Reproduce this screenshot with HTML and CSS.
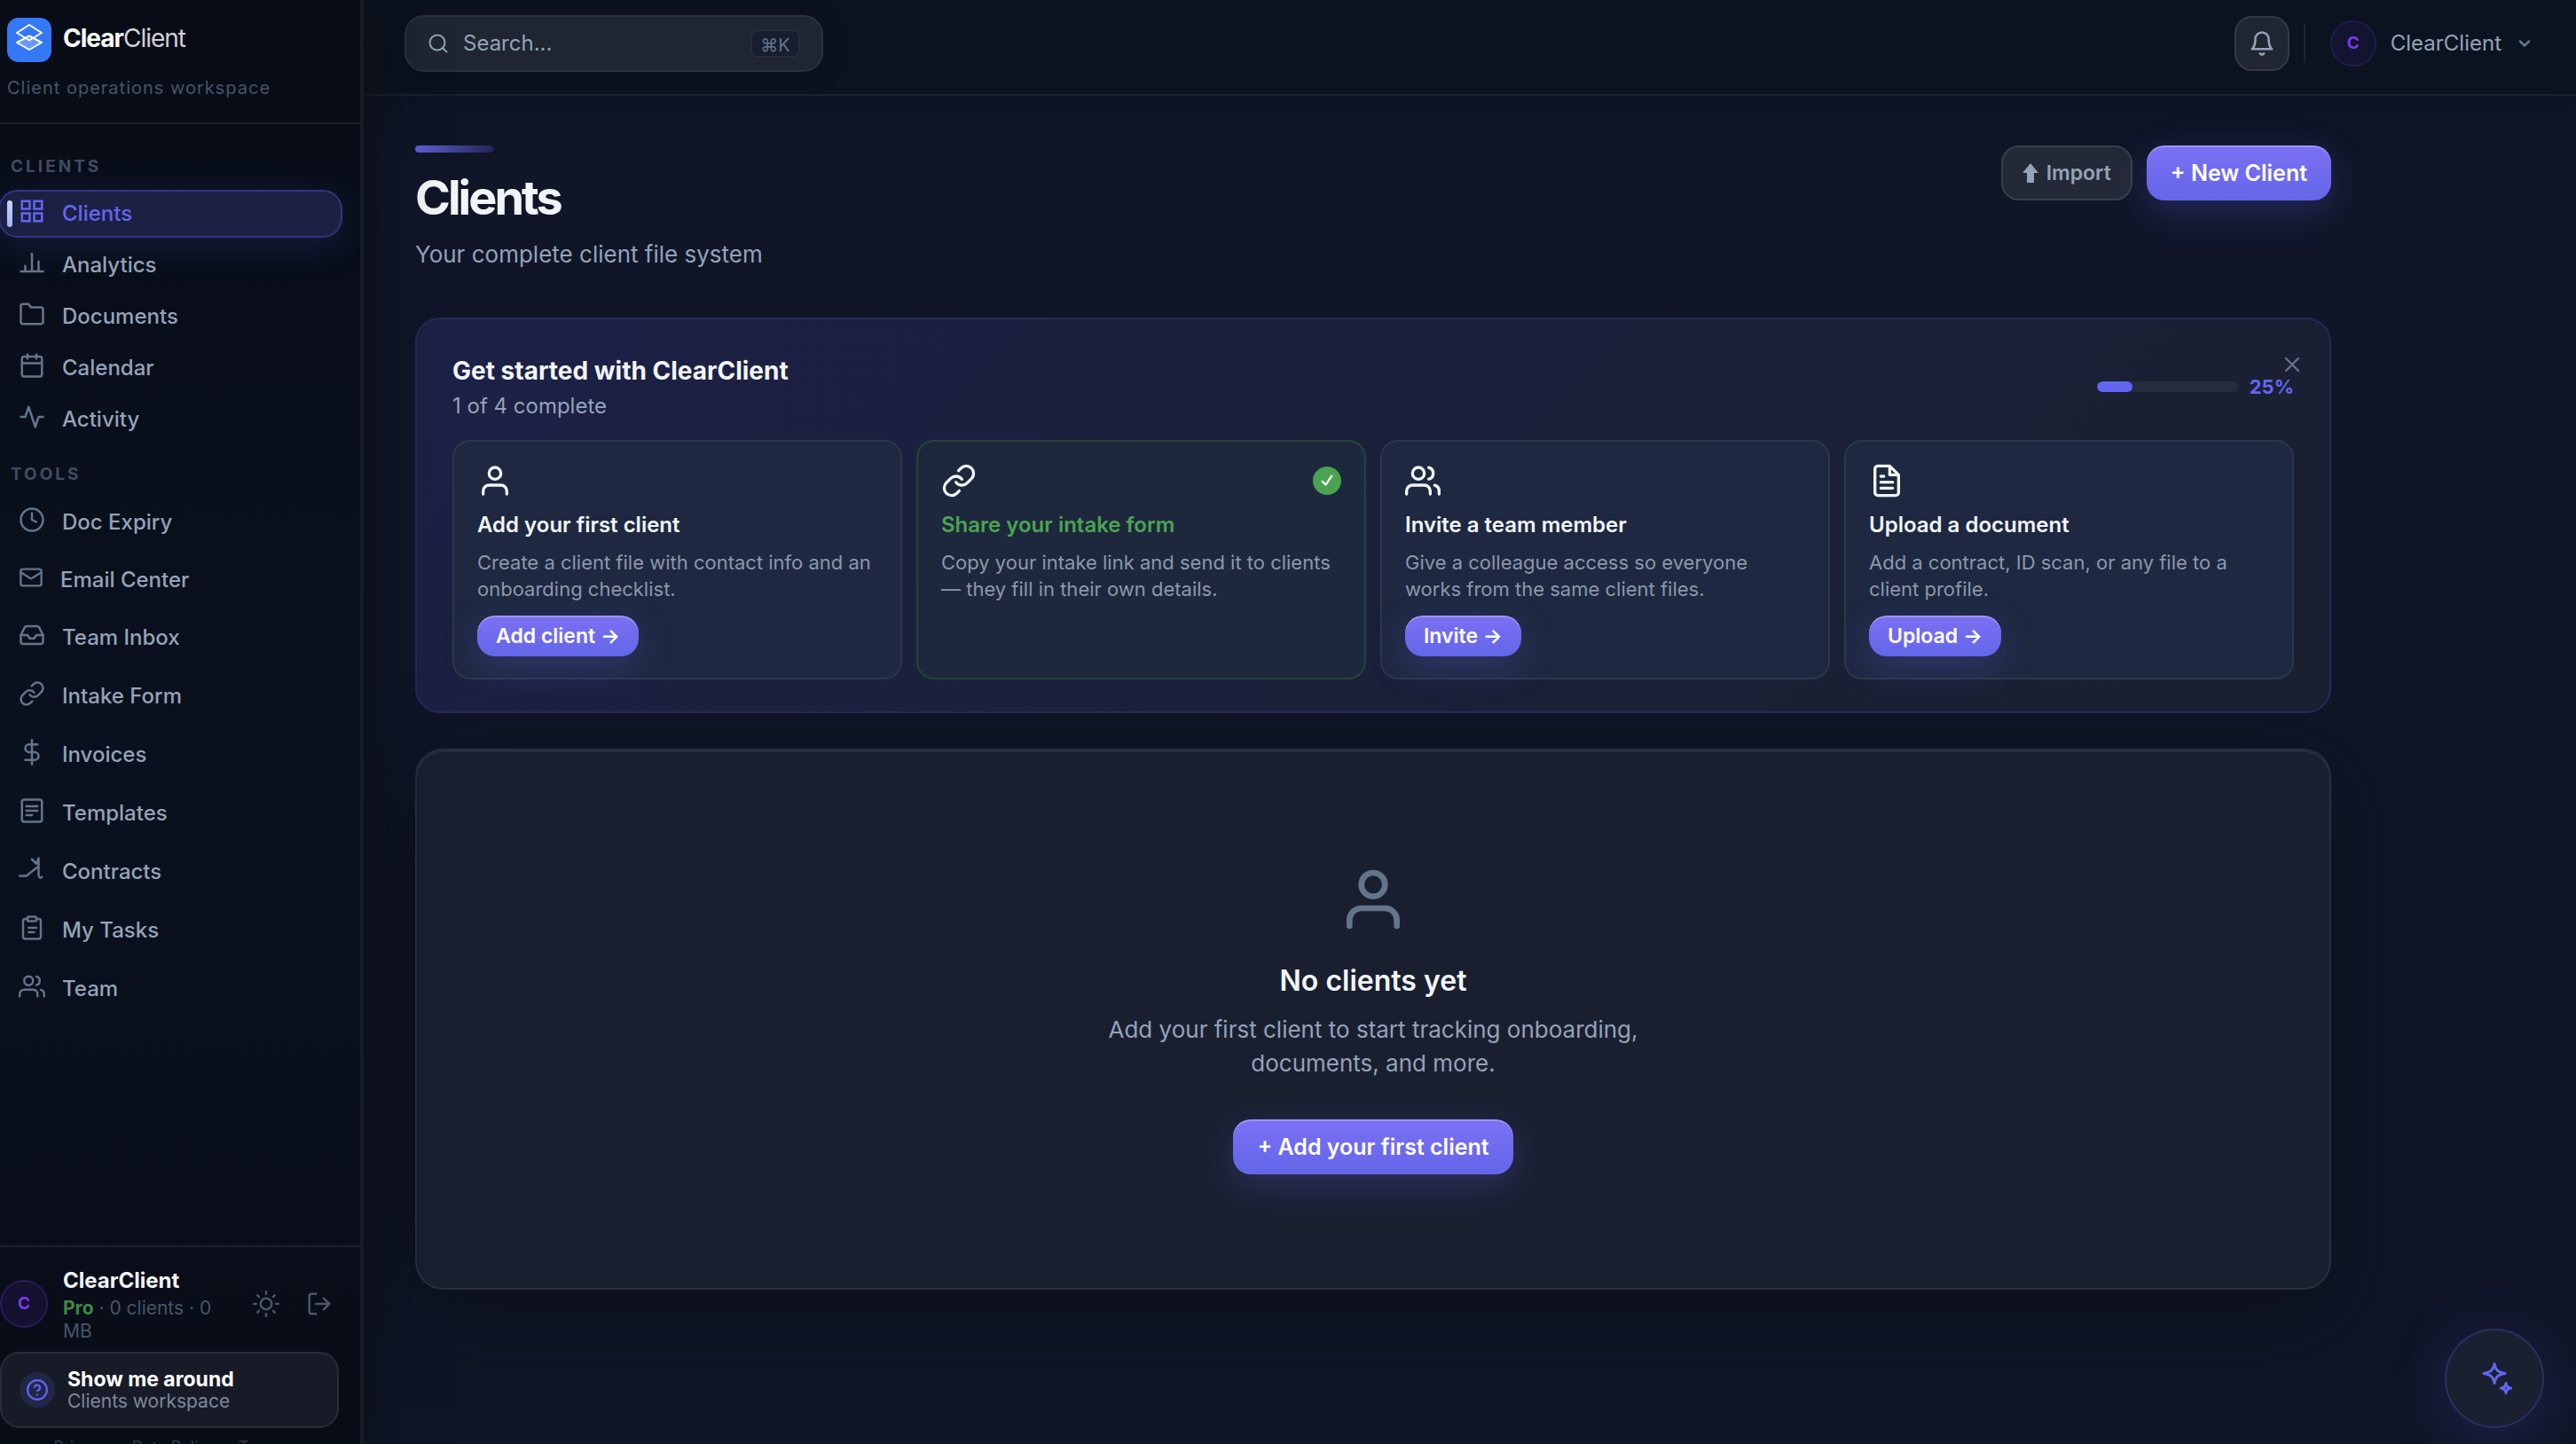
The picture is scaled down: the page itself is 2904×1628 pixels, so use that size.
FILE: index.html
```html
<!DOCTYPE html>
<html lang="en">
<head>
<meta charset="utf-8">
<title>Clients · ClearClient</title>
<meta name="viewport" content="width=device-width, initial-scale=1">
<link rel="stylesheet" href="styles.css">
</head>
<body>
<div class="shell">
  <aside class="sidebar">
    <div class="brand">
      <div class="brand-row">
        <svg class="brand-logo" viewBox="0 0 50 50" aria-hidden="true">
          <rect width="50" height="50" rx="13" fill="#3478f6"/>
          <path d="M25 20.500 39 28 25 36 11 28Z" fill="#fff" fill-opacity=".25"/>
          <path d="M25 8 39 17 25 25.500 11 17Z" fill="none" stroke="#fff" stroke-width="2" stroke-linejoin="round"/>
          <path d="M25 20.500 39 28 25 36 11 28Z" fill="none" stroke="#fff" stroke-width="2" stroke-linejoin="round"/>
        </svg>
        <span class="brand-name"><strong>Clear</strong>Client</span>
      </div>
      <p class="brand-tag">Client operations workspace</p>
    </div>

    <nav class="nav" aria-label="Main">
      <h2 class="nav-label">CLIENTS</h2>
      <a class="nav-item active" href="#clients"><svg class="icon" viewBox="0 0 24 24"><path d="M3 3h7v7H3zM14 3h7v7h-7zM3 14h7v7H3zM14 14h7v7h-7z"/></svg>Clients</a>
      <a class="nav-item" href="#analytics"><svg class="icon" viewBox="0 0 24 24"><path d="M18 20v-9M12 20V4M6 20v-5M2 20h20"/></svg>Analytics</a>
      <a class="nav-item" href="#documents"><svg class="icon" viewBox="0 0 24 24"><path d="M22 19a2 2 0 0 1-2 2H4a2 2 0 0 1-2-2V5a2 2 0 0 1 2-2h5l2 3h9a2 2 0 0 1 2 2z"/></svg>Documents</a>
      <a class="nav-item" href="#calendar"><svg class="icon" viewBox="0 0 24 24"><rect x="3" y="4" width="18" height="18" rx="2"/><path d="M16 2v4M8 2v4M3 10h18"/></svg>Calendar</a>
      <a class="nav-item" href="#activity"><svg class="icon" viewBox="0 0 24 24"><path d="M22 12h-4l-3 9L9 3l-3 9H2"/></svg>Activity</a>

      <h2 class="nav-label spaced">TOOLS</h2>
      <a class="nav-item tall" href="#expiry"><svg class="icon" viewBox="0 0 24 24"><circle cx="12" cy="12" r="10"/><path d="M12 6v6l4 2"/></svg>Doc Expiry</a>
      <a class="nav-item mail" href="#email"><svg class="icon small" viewBox="0 0 24 24"><rect x="2" y="4" width="20" height="16" rx="2"/><path d="m22 7-8.970 5.700a1.940 1.940 0 0 1-2.060 0L2 7"/></svg>Email Center</a>
      <a class="nav-item tall" href="#inbox"><svg class="icon" viewBox="0 0 24 24"><path d="M22 12h-6l-2 3h-4l-2-3H2"/><path d="M5.450 5.110 2 12v6a2 2 0 0 0 2 2h16a2 2 0 0 0 2-2v-6l-3.450-6.890A2 2 0 0 0 16.760 4H7.240a2 2 0 0 0-1.790 1.110z"/></svg>Team Inbox</a>
      <a class="nav-item tall" href="#intake"><svg class="icon" viewBox="0 0 24 24"><path d="M10 13a5 5 0 0 0 7.540.54l3-3a5 5 0 0 0-7.070-7.070l-1.720 1.710"/><path d="M14 11a5 5 0 0 0-7.540-.54l-3 3a5 5 0 0 0 7.070 7.070l1.710-1.710"/></svg>Intake Form</a>
      <a class="nav-item tall" href="#invoices"><svg class="icon" viewBox="0 0 24 24"><path d="M12 1v22M17 5H9.500a3.500 3.500 0 0 0 0 7h5a3.500 3.500 0 0 1 0 7H6"/></svg>Invoices</a>
      <a class="nav-item tall" href="#templates"><svg class="icon" viewBox="0 0 24 24"><rect x="3" y="2" width="18" height="20" rx="2"/><path d="M7 8h10M7 12h10M7 16h5"/></svg>Templates</a>
      <a class="nav-item tall" href="#contracts"><svg class="icon" viewBox="0 0 24 24"><path d="M1 18h6l10-8M12 3l4 4 2-5v15c0 3 2 3 3 2"/></svg>Contracts</a>
      <a class="nav-item tall" href="#tasks"><svg class="icon" viewBox="0 0 24 24"><path d="M16 4h2a2 2 0 0 1 2 2v14a2 2 0 0 1-2 2H6a2 2 0 0 1-2-2V6a2 2 0 0 1 2-2h2"/><rect x="8" y="2" width="8" height="4" rx="1"/><path d="M9 12h7M9 16h5"/></svg>My Tasks</a>
      <a class="nav-item tall" href="#team"><svg class="icon" viewBox="0 0 24 24"><path d="M17 21v-2a4 4 0 0 0-4-4H5a4 4 0 0 0-4 4v2"/><circle cx="9" cy="7" r="4"/><path d="M23 21v-2a4 4 0 0 0-3-3.870M16 3.130a4 4 0 0 1 0 7.750"/></svg>Team</a>
    </nav>

    <div class="side-foot">
      <div class="account">
        <span class="avatar">C</span>
        <div class="account-text">
          <strong class="account-name">ClearClient</strong>
          <p class="account-plan"><b>Pro</b> · 0 clients · 0 MB</p>
        </div>
        <div class="account-actions">
          <button class="ghost" type="button" aria-label="Toggle theme"><svg class="icon" viewBox="0 0 24 24"><circle cx="12" cy="12" r="5"/><path d="M12 1v2M12 21v2M4.220 4.220l1.420 1.420M18.360 18.360l1.420 1.420M1 12h2M21 12h2M4.220 19.780l1.420-1.420M18.360 5.640l1.420-1.420"/></svg></button>
          <button class="ghost" type="button" aria-label="Sign out"><svg class="icon" viewBox="0 0 24 24"><path d="M9 21H5a2 2 0 0 1-2-2V5a2 2 0 0 1 2-2h4M16 17l5-5-5-5M21 12H9"/></svg></button>
        </div>
      </div>
      <button class="tour" type="button">
        <span class="tour-icon"><svg class="icon" viewBox="0 0 24 24"><circle cx="12" cy="12" r="10"/><path d="M9.090 9a3 3 0 0 1 5.830 1c0 2-3 3-3 3M12 17h.01"/></svg></span>
        <span class="tour-text"><strong>Show me around</strong><span>Clients workspace</span></span>
      </button>
      <div class="legal"><a href="#privacy">Privacy</a><span>·</span><a href="#data">Data Policy</a><span>·</span><a href="#terms">Terms</a></div>
    </div>
  </aside>

  <div class="main">
    <header class="topbar">
      <label class="search">
        <svg class="icon" viewBox="0 0 24 24"><circle cx="11" cy="11" r="8.500"/><path d="m21.500 21.500-4-4"/></svg>
        <input type="text" placeholder="Search..." aria-label="Search">
        <kbd>⌘K</kbd>
      </label>
      <div class="top-right">
        <button class="bell" type="button" aria-label="Notifications"><svg class="icon" viewBox="0 0 24 24"><path d="M18 8A6 6 0 0 0 6 8c0 7-3 9-3 9h18s-3-2-3-9M13.730 21a2 2 0 0 1-3.460 0"/></svg></button>
        <span class="divider"></span>
        <button class="profile" type="button"><span class="avatar">C</span>ClearClient<svg class="icon chevron" viewBox="0 0 24 24"><path d="m6 9 6 6 6-6"/></svg></button>
      </div>
    </header>

    <main class="content">
      <div class="page-head">
        <div>
          <div class="accent"></div>
          <h1>Clients</h1>
          <p class="subtitle">Your complete client file system</p>
        </div>
        <div class="page-actions">
          <button class="btn secondary" type="button"><svg class="up" viewBox="0 0 18 22"><path d="M9 0 18 11h-5v11H5V11H0z"/></svg>Import</button>
          <button class="btn primary" type="button">+ New Client</button>
        </div>
      </div>

      <section class="onboard">
        <button class="close" type="button" aria-label="Dismiss"><svg class="icon" viewBox="0 0 24 24"><path d="M18 6 6 18M6 6l12 12"/></svg></button>
        <div class="onboard-head">
          <div>
            <h2>Get started with ClearClient</h2>
            <p>1 of 4 complete</p>
          </div>
          <div class="progress"><div class="track"><div class="fill" style="width:25%"></div></div><span>25%</span></div>
        </div>
        <div class="steps">
          <article class="step">
            <svg class="icon" viewBox="0 0 24 24"><path d="M20 21v-2a4 4 0 0 0-4-4H8a4 4 0 0 0-4 4v2"/><circle cx="12" cy="7" r="4"/></svg>
            <h3>Add your first client</h3>
            <p>Create a client file with contact info and an onboarding checklist.</p>
            <button class="btn primary mini" type="button">Add client →</button>
          </article>
          <article class="step done">
            <svg class="icon" viewBox="0 0 24 24"><path d="M10 13a5 5 0 0 0 7.540.54l3-3a5 5 0 0 0-7.070-7.070l-1.720 1.710"/><path d="M14 11a5 5 0 0 0-7.540-.54l-3 3a5 5 0 0 0 7.070 7.070l1.710-1.710"/></svg>
            <span class="tick"><svg class="icon" viewBox="0 0 24 24"><path d="m5 13 5 5 9-13"/></svg></span>
            <h3>Share your intake form</h3>
            <p>Copy your intake link and send it to clients — they fill in their own details.</p>
          </article>
          <article class="step">
            <svg class="icon" viewBox="0 0 24 24"><path d="M17 21v-2a4 4 0 0 0-4-4H5a4 4 0 0 0-4 4v2"/><circle cx="9" cy="7" r="4"/><path d="M23 21v-2a4 4 0 0 0-3-3.870M16 3.130a4 4 0 0 1 0 7.750"/></svg>
            <h3>Invite a team member</h3>
            <p>Give a colleague access so everyone works from the same client files.</p>
            <button class="btn primary mini" type="button">Invite →</button>
          </article>
          <article class="step">
            <svg class="icon" viewBox="0 0 24 24"><path d="M14 2H6a2 2 0 0 0-2 2v16a2 2 0 0 0 2 2h12a2 2 0 0 0 2-2V8zM14 2v6h6M16 13H8M16 17H8M10 9H8"/></svg>
            <h3>Upload a document</h3>
            <p>Add a contract, ID scan, or any file to a client profile.</p>
            <button class="btn primary mini" type="button">Upload →</button>
          </article>
        </div>
      </section>

      <section class="empty">
        <svg class="icon" viewBox="0 0 24 24"><path d="M20 21v-2a4 4 0 0 0-4-4H8a4 4 0 0 0-4 4v2"/><circle cx="12" cy="7" r="4"/></svg>
        <h2>No clients yet</h2>
        <p>Add your first client to start tracking onboarding, documents, and more.</p>
        <button class="btn primary" type="button">+ Add your first client</button>
      </section>
    </main>
  </div>
</div>
<button class="fab" type="button" aria-label="Assistant"><svg class="icon" viewBox="0 0 40 40"><path d="M20 3.500c1.600 7.500 3.500 9.400 12 11-8.500 1.600-10.400 3.500-12 11-1.600-7.500-3.500-9.400-12-11 8.500-1.600 10.400-3.500 12-11Z"/><path d="M33 25.500c.9 3.900 1.600 4.600 5.500 5.500-3.900.9-4.600 1.600-5.500 5.500-.9-3.900-1.600-4.600-5.500-5.500 3.900-.9 4.600-1.600 5.500-5.500Z"/></svg></button>
</body>
</html>
```
FILE: styles.css
```css
:root {
  --bg: #101628;
  --topbar: #0c1320;
  --line: #1b202c;
  --text: #f1f5f9;
  --muted: #94a3b8;
  --dim: #64748b;
  --faint: #475569;
  --accent: #6366f1;
  --green: #4ba352;
}

* { box-sizing: border-box; }

body {
  margin: 0;
  background: var(--bg);
  color: var(--text);
  font-family: Inter, "Liberation Sans", sans-serif;
  font-size: 24px;
  line-height: 32px;
  overflow: hidden;
}

h1, h2, h3, p { margin: 0; }
a { color: inherit; text-decoration: none; }
button, input { font: inherit; color: inherit; }
button { margin: 0; padding: 0; border: 0; background: none; cursor: pointer; }

.icon {
  display: block;
  flex: none;
  width: 30px;
  height: 30px;
  fill: none;
  stroke: currentColor;
  stroke-width: 2;
  stroke-linecap: round;
  stroke-linejoin: round;
}

.shell {
  display: grid;
  grid-template-columns: 410px 1fr;
  height: 100vh;
  overflow: hidden;
}

/* Sidebar */
.sidebar {
  z-index: 2;
  display: flex;
  flex-direction: column;
  height: calc(100vh + 26px);
  background: linear-gradient(#080c17, #0a111e 55%, #080c17);
  border-right: 4px solid #171c28;
  box-shadow: 8px 0 64px rgba(11, 12, 18, .8);
}

.brand {
  height: 140px;
  padding: 20px 8px 0;
  border-bottom: 2px solid var(--line);
}

.brand-row { display: flex; align-items: center; gap: 13px; }
.brand-logo { width: 50px; height: 50px; }
.brand-name { padding-bottom: 4px; font-size: 28px; letter-spacing: -1px; color: #cfd2d8; }
.brand-name strong { font-weight: 700; color: #fff; }
.brand-tag { margin-top: 13px; font-size: 20px; letter-spacing: 1px; color: var(--faint); }

.nav {
  flex: 1;
  display: flex;
  flex-direction: column;
  gap: 4px;
  margin-left: -2px;
  padding: 31px 20px 0 0;
}

.nav-label {
  padding: 2px 14px 7px;
  font-size: 19px;
  font-weight: 700;
  line-height: 30px;
  letter-spacing: 3px;
  color: #424c60;
}

.nav-label.spaced { padding-top: 16px; padding-bottom: 4px; }

.nav-item {
  position: relative;
  display: flex;
  align-items: center;
  gap: 19px;
  height: 54px;
  padding-left: 21px;
  border: 2px solid transparent;
  border-radius: 22px;
  font-weight: 500;
  color: var(--muted);
}

.nav-item.tall { height: 62px; }
.nav-item.mail { height: 60px; }
.nav-item .icon { margin-bottom: 7px; color: var(--dim); }
.nav-item .icon.small { width: 28px; height: 28px; }

.nav-item.active {
  color: var(--accent);
  background: #1c2043;
  border-color: #32357a;
  box-shadow: 0 8px 40px rgba(60, 62, 160, .3);
}

.nav-item.active .icon { color: var(--accent); stroke-linejoin: miter; }

.nav-item.active::before {
  content: "";
  position: absolute;
  left: 8px;
  top: 10px;
  width: 6px;
  height: 30px;
  border-radius: 3px;
  background: linear-gradient(#c7d2fe, #a5b4fc);
}

.side-foot {
  padding: 18px 24px 0 0;
  border-top: 2px solid var(--line);
}

.account { display: flex; align-items: center; gap: 17px; height: 92px; margin-bottom: 8px; }

.avatar {
  display: grid;
  place-items: center;
  flex: none;
  width: 54px;
  height: 54px;
  border: 2px solid #2a1a5a;
  border-radius: 50%;
  background: #141230;
  color: #7c3aed;
  font-size: 19px;
  font-weight: 700;
}

.account-text { flex: 1; min-width: 0; }
.account-name { display: block; font-weight: 700; line-height: 36px; }
.account-plan { font-size: 21px; line-height: 26px; color: var(--faint); }
.account-plan b { font-weight: 700; color: #3f8a42; }
.account-actions { display: flex; gap: 16px; }
.ghost { display: grid; place-items: center; width: 44px; height: 44px; color: #4b566a; }

.tour {
  display: flex;
  align-items: center;
  gap: 14px;
  width: 100%;
  height: 86px;
  padding: 0 20px;
  border: 2px solid #272c38;
  border-radius: 22px;
  background: #171b27;
  text-align: left;
}

.tour-icon {
  display: grid;
  place-items: center;
  width: 40px;
  height: 40px;
  border-radius: 50%;
  background: #222648;
  color: var(--accent);
}

.tour-icon .icon { width: 26px; height: 26px; }
.tour-text { display: grid; line-height: 26px; }
.tour-text strong { font-size: 23px; font-weight: 700; color: #fff; }
.tour-text span { font-size: 21px; line-height: 24px; color: #7d889d; }

.legal {
  display: flex;
  justify-content: center;
  gap: 10px;
  height: 44px;
  padding-top: 6px;
  font-size: 18px;
  color: #2f394b;
}

/* Top bar */
.main { display: flex; flex-direction: column; min-width: 0; }

.topbar {
  display: flex;
  align-items: center;
  justify-content: space-between;
  height: 108px;
  padding: 0 48px 8px 46px;
  background: var(--topbar);
  border-bottom: 2px solid #1c222e;
  box-shadow: 0 8px 48px rgba(10, 16, 26, .6);
}

.search {
  display: flex;
  align-items: center;
  gap: 16px;
  width: 472px;
  height: 64px;
  padding: 0 24px;
  border: 2px solid #2c323d;
  border-radius: 22px;
  background: #1f2531;
  box-shadow: 0 4px 24px rgba(0, 0, 0, .25);
  color: var(--muted);
}

.search .icon { width: 24px; height: 24px; }

.search input {
  flex: 1;
  min-width: 0;
  padding: 0;
  border: 0;
  outline: 0;
  background: none;
}

.search input::placeholder { color: var(--muted); opacity: 1; }

.search kbd {
  display: grid;
  place-items: center;
  width: 56px;
  height: 32px;
  border: 2px solid #262c40;
  border-radius: 8px;
  background: #181d30;
  font-family: inherit;
  font-size: 20px;
  color: var(--dim);
}

.top-right { display: flex; align-items: center; }

.bell {
  display: grid;
  place-items: center;
  width: 62px;
  height: 62px;
  border: 2px solid #333945;
  border-radius: 20px;
  background: #1f2531;
  color: var(--muted);
}

.divider { width: 2px; height: 44px; margin: 0 28px 0 16px; background: #1d2330; }
.profile { display: flex; align-items: center; gap: 16px; color: var(--muted); }
.profile .avatar { width: 52px; height: 52px; background: #121430; border-color: #221a4e; }
.chevron { width: 20px; height: 20px; color: var(--dim); stroke-width: 3; }

/* Page */
.content {
  max-width: 2276px;
  padding: 56px 58px;
}

.page-head { display: flex; justify-content: space-between; height: 194px; }

.accent {
  width: 88px;
  height: 8px;
  border-radius: 4px;
  background: linear-gradient(90deg, #5f5fd8, #232653);
}

h1 { margin: 18px 0 14px; font-size: 54px; font-weight: 700; line-height: 66px; letter-spacing: -3px; }
.subtitle { font-size: 26px; line-height: 34px; color: var(--muted); }
.page-actions { display: flex; gap: 16px; }

.btn {
  display: flex;
  align-items: center;
  justify-content: center;
  height: 62px;
  padding: 0 27px;
  border-radius: 20px;
  font-size: 25px;
  font-weight: 600;
  white-space: nowrap;
}

.primary {
  color: #fff;
  background: linear-gradient(#7c70f3, #6366e8);
  box-shadow: inset 0 2px 0 rgba(255, 255, 255, .25), 0 12px 40px rgba(99, 102, 241, .25);
}

.secondary {
  gap: 9px;
  padding: 0 22px;
  border: 2px solid #393e4c;
  background: #242937;
  color: var(--muted);
  font-size: 23px;
}

.up { width: 18px; height: 22px; fill: currentColor; }

.onboard {
  position: relative;
  padding: 40px 40px 36px;
  border: 2px solid #262a58;
  border-radius: 28px;
  background: linear-gradient(135deg, #1c2147, #1b203a 50%, #1a2030);
}

.close { position: absolute; right: 28px; top: 37px; color: var(--dim); }
.close .icon { width: 28px; height: 28px; }

.onboard-head { display: flex; align-items: center; justify-content: space-between; margin-bottom: 24px; }
.onboard h2 { font-size: 28px; font-weight: 700; line-height: 36px; }
.onboard-head p { margin-top: 8px; line-height: 28px; color: var(--muted); }
.progress { display: flex; align-items: center; gap: 12px; font-size: 22px; font-weight: 700; color: var(--accent); }
.track { width: 160px; height: 12px; border-radius: 6px; background: #272b3f; overflow: hidden; }
.fill { height: 100%; border-radius: 6px; background: var(--accent); }

.steps { display: grid; grid-template-columns: repeat(4, 1fr); gap: 16px; }

.step {
  position: relative;
  padding: 24px 26px;
  border: 2px solid #2d374b;
  border-radius: 20px;
  background: #1e2840;
}

.step > .icon { width: 40px; height: 40px; }
.step h3 { margin: 14px 0 11px; font-size: 24px; font-weight: 600; line-height: 32px; }
.step p { font-size: 22px; line-height: 30px; color: #8c97ab; }
.step.done { border-color: #26443e; background: #1d283c; }
.step.done h3 { color: var(--green); }

.tick {
  position: absolute;
  right: 26px;
  top: 28px;
  display: grid;
  place-items: center;
  width: 32px;
  height: 32px;
  border-radius: 50%;
  background: var(--green);
  color: #fff;
}

.tick .icon { width: 18px; height: 18px; stroke-width: 3; }
.mini { height: 46px; margin-top: 15px; padding: 0 21px; font-size: 23px; }

.empty {
  display: flex;
  flex-direction: column;
  align-items: center;
  margin-top: 40px;
  padding: 128px 40px;
  border: 2px solid #292f3e;
  border-radius: 32px;
  background: #1a1f30;
  box-shadow: inset 0 2px 0 #282d3b, 0 24px 96px rgba(10, 12, 14, .6);
  text-align: center;
}

.empty .icon { width: 80px; height: 80px; color: var(--dim); }
.empty h2 { margin: 32px 0 16px; font-size: 32px; font-weight: 600; line-height: 40px; }
.empty p { max-width: 640px; margin-bottom: 44px; font-size: 26px; line-height: 38px; color: var(--muted); }

.fab {
  position: fixed;
  right: 36px;
  bottom: 18px;
  z-index: 3;
  display: grid;
  place-items: center;
  width: 112px;
  height: 112px;
  border: 2px solid #2c2f62;
  border-radius: 50%;
  background: #1a2030;
  box-shadow: 0 12px 64px rgba(70, 72, 190, .25);
  color: var(--accent);
}

.fab .icon { width: 40px; height: 40px; stroke-width: 3; }
```
